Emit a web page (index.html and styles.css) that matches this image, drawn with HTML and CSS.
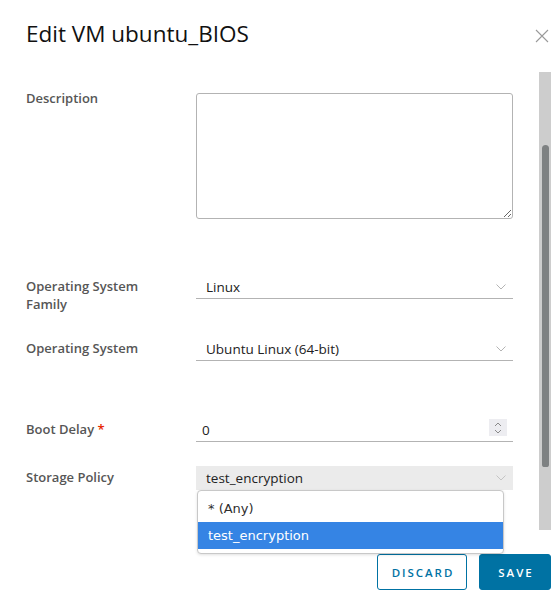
FILE: index.html
```html
<!DOCTYPE html>
<html lang="en">
<head>
<meta charset="utf-8">
<title>Edit VM ubuntu_BIOS</title>
<link rel="stylesheet" href="styles.css">
</head>
<body>
<div class="modal">
  <header class="modal-header">
    <h1 class="modal-title">Edit VM ubuntu_BIOS</h1>
    <button class="close" aria-label="Close">
      <svg width="14" height="14" viewBox="0 0 14 14"><path d="M1 1 L13 13 M13 1 L1 13" stroke="#9a9a9a" stroke-width="1.1" fill="none"/></svg>
    </button>
  </header>
  <div class="modal-body">
    <div class="form">
      <div class="row row-desc">
        <div class="label">Description</div>
        <textarea class="textarea"></textarea>
      </div>
      <div class="row row-family">
        <div class="label">Operating System Family</div>
        <div class="select">
          <span>Linux</span>
          <svg class="chev" width="10" height="6" viewBox="0 0 10 6"><path d="M0.5 0.5 L5 5 L9.5 0.5" stroke="#b4b4b4" fill="none"/></svg>
        </div>
      </div>
      <div class="row row-os">
        <div class="label">Operating System</div>
        <div class="select">
          <span>Ubuntu Linux (64-bit)</span>
          <svg class="chev" width="10" height="6" viewBox="0 0 10 6"><path d="M0.5 0.5 L5 5 L9.5 0.5" stroke="#b4b4b4" fill="none"/></svg>
        </div>
      </div>
      <div class="row row-boot">
        <div class="label">Boot Delay <span class="req">*</span></div>
        <div class="number">
          <span>0</span>
          <span class="spinner">
            <svg width="10" height="14" viewBox="0 0 10 14"><path d="M2 5 L5 2 L8 5 M2 9 L5 12 L8 9" stroke="#8a8a8a" fill="none"/></svg>
          </span>
        </div>
      </div>
      <div class="row row-storage">
        <div class="label">Storage Policy</div>
        <div class="select select-open">
          <span>test_encryption</span>
          <svg class="chev" width="10" height="6" viewBox="0 0 10 6"><path d="M0.5 0.5 L5 5 L9.5 0.5" stroke="#c4c4c4" fill="none"/></svg>
          <ul class="dropdown">
            <li class="opt">* (Any)</li>
            <li class="opt opt-selected">test_encryption</li>
          </ul>
        </div>
      </div>
    </div>
    <div class="scrollbar"><div class="thumb"></div></div>
  </div>
  <footer class="modal-footer">
    <button class="btn btn-outline">Discard</button>
    <button class="btn btn-primary">Save</button>
  </footer>
</div>
</body>
</html>
```
FILE: styles.css
```css
* { box-sizing: border-box; }
html, body { margin: 0; padding: 0; background: #fff; }
body {
  font-family: "Open Sans", "Liberation Sans", sans-serif;
  width: 555px;
  height: 596px;
  overflow: hidden;
}
.modal { width: 555px; height: 596px; display: flex; flex-direction: column; }

.modal-header {
  height: 72px;
  display: flex;
  align-items: flex-start;
  justify-content: space-between;
  padding: 19px 4px 0 26px;
}
.modal-title {
  margin: 0;
  font-size: 22.5px;
  font-weight: 400;
  line-height: 30px;
  color: #111;
}
.close {
  border: 0; background: none; padding: 0; margin-top: 10px; width: 16px; height: 14px;
  display: flex; align-items: center; justify-content: flex-start;
}

.modal-body { height: 482px; display: flex; }
.form { width: 539px; padding-top: 17px; padding-left: 26px; }

.row { display: grid; grid-template-columns: 170px 317px; align-items: start; }
.row-family { margin-top: 56px; }
.row-os { margin-top: 24px; }
.row-boot { margin-top: 57px; }
.row-storage { margin-top: 24px; }

.label {
  font-size: 13px;
  font-weight: 600;
  line-height: 18px;
  color: #565656;
  padding-right: 42px;
  padding-top: 2px;
}
.row-desc .label { padding-top: 0; }
.req { color: #e62700; }

.textarea {
  margin: 4px 0 0 0;
  width: 317px;
  height: 126px;
  border: 1px solid #b3b3b3;
  border-radius: 3px;
  resize: both;
  font: inherit;
  display: block;
}

.select {
  position: relative;
  height: 24px;
  border-bottom: 1px solid #b3b3b3;
  display: flex;
  align-items: center;
  justify-content: space-between;
  padding: 0 7px 0 10px;
  font-size: 13.5px;
  color: #222;
}
.chev { display: block; }
.select-open { background: #ebebeb; border-bottom-color: #ebebeb; }

.number {
  height: 24px;
  border-bottom: 1px solid #b3b3b3;
  display: flex;
  align-items: center;
  justify-content: space-between;
  padding: 0 6px 0 6px;
  font-size: 13.5px;
  color: #222;
}
.spinner {
  width: 18px; height: 17px;
  background: #ededf1;
  display: flex; align-items: center; justify-content: center;
  margin-top: -4px;
}

.dropdown {
  position: absolute;
  top: 24px;
  left: 1px;
  width: 307px;
  margin: 0;
  padding: 4px 0;
  list-style: none;
  background: #fff;
  border: 1px solid #c8c8c8;
  border-radius: 4px;
  box-shadow: 0 1px 3px rgba(0,0,0,0.12);
  font-family: "DejaVu Sans", sans-serif;
  font-size: 13px;
  z-index: 2;
}
.opt { height: 27px; line-height: 27px; padding-left: 10px; color: #2e2e2e; }
.opt-selected { background: #3584e4; color: #fff; }

.scrollbar {
  width: 12px;
  height: 458px;
  background: #cdcdcd;
  padding: 73px 2px 0 3px;
}
.thumb { width: 7px; height: 322px; background: #7e8182; border-radius: 4px 4px 3px 3px; }

.modal-footer {
  display: flex;
  justify-content: flex-end;
  gap: 12px;
  padding-right: 4px;
}
.btn {
  height: 36px;
  border-radius: 3px;
  font-family: "Open Sans", sans-serif;
  font-size: 11.5px;
  font-weight: 600;
  letter-spacing: 0.17em;
  text-transform: uppercase;
  padding: 0 0 0 2px;
}
.btn-outline { width: 90px; background: #fff; border: 1px solid #0072a3; color: #0072a3; }
.btn-primary { width: 72px; background: #0072a3; border: 1px solid #0072a3; color: #fff; }
```
